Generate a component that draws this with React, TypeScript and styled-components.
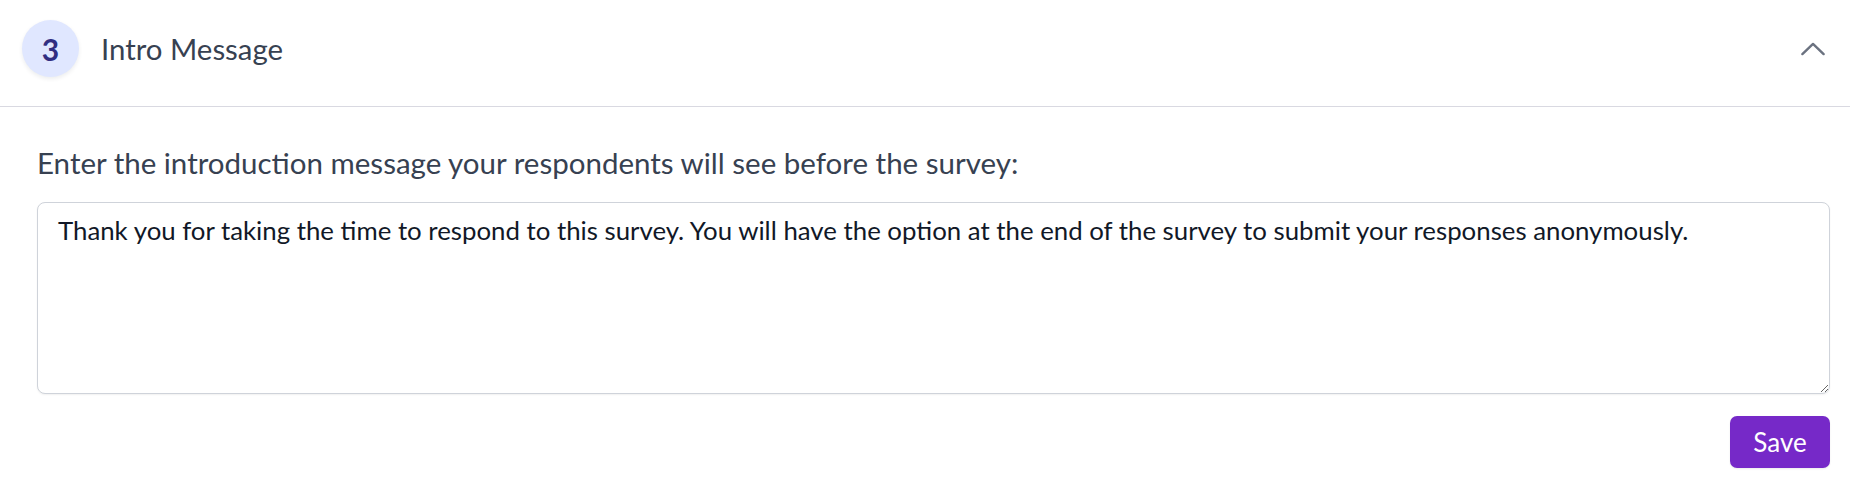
import React from 'react';
import styled, { createGlobalStyle } from 'styled-components';

const GlobalStyle = createGlobalStyle`
  html, body {
    margin: 0;
    padding: 0;
    background: #ffffff;
  }
  body {
    font-family: Lato, "Noto Sans", "Liberation Sans", sans-serif;
    color: #374151;
  }
  * { box-sizing: border-box; }
`;

const Panel = styled.section`
  width: 100%;
  background: #fff;
`;

const Header = styled.div`
  display: flex;
  align-items: center;
  padding: 20px 25px 29px 22px;
  border-bottom: 1px solid #d9d9e1;
`;

const StepBadge = styled.div`
  width: 57px;
  height: 57px;
  border-radius: 50%;
  background: #e0e7ff;
  color: #312e81;
  display: flex;
  align-items: center;
  justify-content: center;
  font-size: 30px;
  font-weight: 700;
  box-shadow: 0 2px 4px rgba(15, 23, 42, 0.08);
  flex-shrink: 0;
`;

const Title = styled.h3`
  margin: 0 0 0 22px;
  font-size: 29.4px;
  font-weight: 400;
  color: #374151;
  flex: 1;
`;

const Toggle = styled.button`
  border: 0;
  background: none;
  padding: 0;
  width: 24px;
  height: 24px;
  display: flex;
  align-items: center;
  justify-content: center;
  color: #6b7280;
  cursor: pointer;
`;

const Body = styled.div`
  padding: 37px 20px 15px 37px;
`;

const Label = styled.label`
  display: block;
  font-size: 29.5px;
  line-height: 38px;
  color: #374151;
`;

const MessageInput = styled.textarea`
  display: block;
  width: 100%;
  height: 192px;
  margin-top: 20px;
  padding: 10px 20px;
  border: 1px solid #cfd3da;
  border-radius: 8px;
  box-shadow: 0 1px 2px rgba(0, 0, 0, 0.06);
  font-family: inherit;
  font-size: 25.8px;
  line-height: 34px;
  color: #111827;
  outline: none;
`;

const Actions = styled.div`
  display: flex;
  justify-content: flex-end;
  margin-top: 22px;
`;

const SaveButton = styled.button`
  width: 100px;
  height: 52px;
  border: 0;
  border-radius: 7px;
  background: #7629c8;
  color: #fff;
  font-family: inherit;
  font-size: 26px;
  cursor: pointer;
  box-shadow: 0 1px 2px rgba(0, 0, 0, 0.08);
`;

const ChevronUp = () => (
  <svg width="26" height="14" viewBox="0 0 26 14" fill="none">
    <path d="M1.5 12.5 13 1.5l11.5 11" stroke="currentColor" strokeWidth="2.6" strokeLinecap="round" strokeLinejoin="round" />
  </svg>
);

const App: React.FC = () => {
  return (
    <>
      <GlobalStyle />
      <Panel>
        <Header>
          <StepBadge>3</StepBadge>
          <Title>Intro Message</Title>
          <Toggle aria-label="Collapse">
            <ChevronUp />
          </Toggle>
        </Header>
        <Body>
          <Label htmlFor="intro">
            Enter the introduction message your respondents will see before the survey:
          </Label>
          <MessageInput
            id="intro"
            defaultValue="Thank you for taking the time to respond to this survey. You will have the option at the end of the survey to submit your responses anonymously."
          />
          <Actions>
            <SaveButton>Save</SaveButton>
          </Actions>
        </Body>
      </Panel>
    </>
  );
};

export default App;
